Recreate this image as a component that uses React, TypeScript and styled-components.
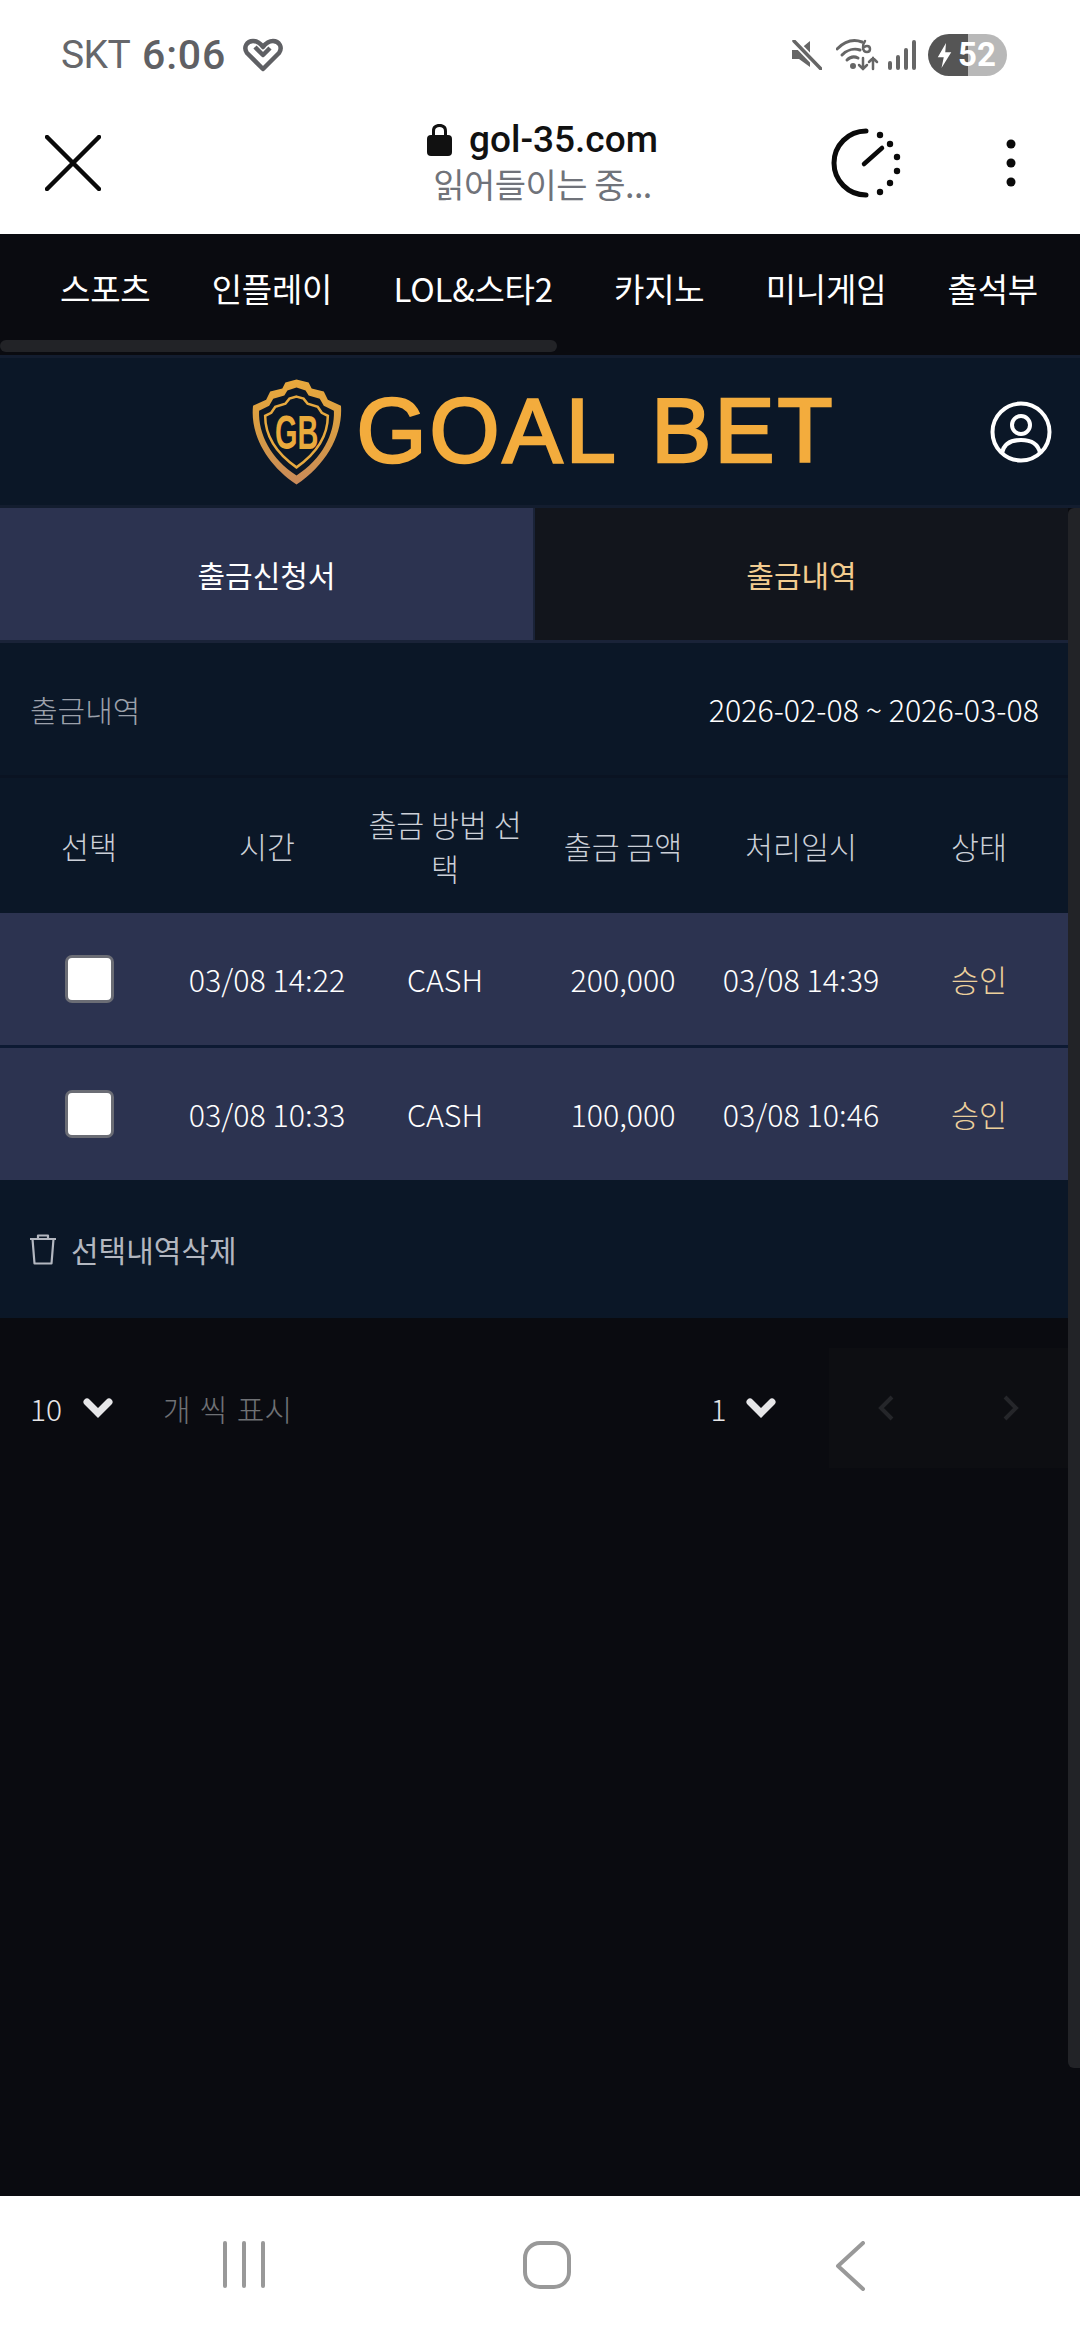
import React from "react";
import styled, { createGlobalStyle } from "styled-components";

const KR = `"Noto Sans CJK KR", "Noto Sans", sans-serif`;

const Global = createGlobalStyle`
  html, body { margin: 0; padding: 0; width: 1080px; height: 2340px; overflow: hidden; background: #0a0b10; }
  * { box-sizing: border-box; }
  #root { width: 1080px; height: 2340px; }
`;

const Page = styled.div`
  width: 1080px; height: 2340px; display: flex; flex-direction: column; background: #0a0b10;
  font-family: ${KR}; font-weight: 300; color: #fff;
`;

const StatusBar = styled.div`
  height: 92px; flex: none; background: #fff; display: flex; align-items: flex-start; justify-content: space-between;
  padding: 34px 73px 0 61px; color: #66676b; font-family: Roboto, "Liberation Sans", sans-serif;
`;
const StatusLeft = styled.div`display: flex; align-items: center; gap: 12px; height: 42px; font-size: 39px; line-height: 42px;`;
const Carrier = styled.span`font-weight: 400; letter-spacing: -0.6px;`;
const Clock = styled.span`font-weight: 500; font-size: 41px; color: #5f6064; letter-spacing: 0.8px; margin-right: 5px;`;
const StatusRight = styled.div`display: flex; align-items: center; height: 42px; gap: 10px;`;
const Battery = styled.div`
  width: 79px; height: 42px; border-radius: 21px; overflow: hidden; display: flex; align-items: center;
  background: linear-gradient(90deg, #555 0, #555 40px, #b8b8b8 40px, #b8b8b8 100%);
  color: #fff; font-family: Roboto, sans-serif; font-weight: 700; font-size: 33px; padding-left: 9px; gap: 6px; margin-left: 2px;
`;
const BatteryValue = styled.span`line-height: 42px;`;

const BrowserBar = styled.div`
  height: 142px; flex: none; background: #fff; display: grid; grid-template-columns: 1fr auto 1fr; align-items: center;
`;
const CloseBtn = styled.div`padding-left: 45px; display: flex; margin-top: -1px;`;
const UrlBox = styled.div`display: flex; flex-direction: column; align-items: center; margin: -3px 0 0 5px;`;
const UrlRow = styled.div`display: flex; align-items: center; gap: 17px; font-family: Roboto, sans-serif; font-weight: 500; font-size: 37px; line-height: 44px; color: #111;`;
const Loading = styled.div`font-family: ${KR}; font-weight: 400; font-size: 34px; line-height: 44px; color: #70737a; letter-spacing: -0.5px;`;
const BrowserRight = styled.div`display: flex; align-items: center; justify-content: flex-end; padding-right: 64px; gap: 104px; margin-top: -1px;`;

const NavBar = styled.div`height: 121px; flex: none; background: #0a0b10; display: flex; flex-direction: column;`;
const NavRow = styled.div`height: 106px; display: flex; align-items: flex-start; justify-content: space-between; padding: 26px 42px 0 60px; flex: none;`;
const NavItem = styled.div`font-size: 33px; line-height: 56px; font-weight: 400; white-space: nowrap; color: #fff; letter-spacing: -0.2px;`;
const NavThumb = styled.div`width: 557px; height: 12px; border-radius: 6px; background: #222327; flex: none;`;

const Header = styled.div`
  height: 153px; flex: none; background: #0b1727; border-top: 3px solid #131d2f; border-bottom: 3px solid #131d2f;
  display: grid; grid-template-columns: 1fr auto 1fr; align-items: center;
`;
const Logo = styled.div`display: flex; align-items: center; gap: 14px; margin-left: 6px;`;
const LogoText = styled.span`
  font-family: "Liberation Sans", Arial, sans-serif; font-size: 90px; line-height: 100px; font-weight: 400;
  color: #f3ac3d; -webkit-text-stroke: 2.5px #f3ac3d; letter-spacing: 3px; word-spacing: 8px; white-space: pre; margin-top: -2px; display: block;
`;
const UserBtn = styled.div`justify-self: end; padding-right: 28px; display: flex;`;

const Body = styled.div`flex: 1; display: flex; align-items: flex-start; min-height: 0; background: #0a0b10;`;
const Content = styled.div`width: 1068px; flex: none; display: flex; flex-direction: column;`;
const Track = styled.div`width: 12px; height: 1560px; flex: none; background: #222327; border-radius: 6px 0 0 6px;`;

const Tabs = styled.div`display: flex; height: 135px; border-bottom: 3px solid #1a2338; background: #1a2338;`;
const Tab = styled.div<{ $active?: boolean }>`
  flex: 1; display: flex; align-items: center; justify-content: center; font-size: 30px; font-weight: 400;
  background: ${p => (p.$active ? "#2c3350" : "#12151c")}; color: ${p => (p.$active ? "#fff" : "#f2cc90")};
  margin-right: ${p => (p.$active ? "2px" : "0")};
`;

const Panel = styled.div`background: #0b1727; display: flex; flex-direction: column;`;
const TitleRow = styled.div`
  height: 135px; display: flex; align-items: center; justify-content: space-between; padding: 0 29px 0 30px;
  border-bottom: 3px solid #0a1322; font-size: 30.4px;
`;
const TitleLabel = styled.span`color: #9ca1ab; font-size: 30px;`;
const Range = styled.span`color: #fff;`;

const Grid = styled.div<{ $h: number; $bg: string }>`
  display: grid; grid-template-columns: repeat(6, 178px); align-items: center; justify-items: center; text-align: center;
  height: ${p => p.$h}px; background: ${p => p.$bg}; font-size: 30.4px; line-height: 44px;
`;
const HeadCell = styled.div`color: #ccd0d8; padding: 0 10px;`;
const Divider = styled.div`height: 3px; background: #0d1a33;`;
const Cell = styled.div<{ $gold?: boolean }>`color: ${p => (p.$gold ? "#ecd09c" : "#fff")}; white-space: nowrap;`;
const Check = styled.div`width: 49px; height: 48px; background: #fff; border: 3px solid #6b6d75; border-radius: 7px;`;

const DeleteRow = styled.div`
  height: 138px; display: flex; align-items: center; gap: 14px; padding: 0 0 0 29px; background: #0b1727; color: #b3b7c0; font-size: 30px; font-weight: 400;
`;

const Pager = styled.div`height: 171px; display: flex; align-items: flex-start; padding-top: 30px; background: #0a0b10;`;
const PagerLeft = styled.div`display: flex; align-items: center; height: 120px; padding-left: 30px; flex: none;`;
const PagerNum = styled.span`color: #e6e6e8; font-size: 30px; width: 53px;`;
const PagerLabel = styled.span`color: #6f7175; font-size: 30px; margin-left: 50px; letter-spacing: 0.3px; word-spacing: 2px;`;
const PagerPage = styled.div`display: flex; align-items: center; height: 120px; margin-left: 418px; flex: none;`;
const PageNum = styled.span`color: #e6e6e8; font-size: 30px; width: 36px;`;
const PagerBtns = styled.div`
  flex: 1; height: 120px; margin-left: 53px; background: #0d0e12; display: flex; align-items: center; justify-content: space-between; padding: 0 49px 0 49px;
`;

const BottomNav = styled.div`
  height: 144px; flex: none; background: #fff; display: flex; align-items: flex-start; padding: 45px 0 0 223px;
`;
const RecentIcon = styled.div`display: flex; gap: 15px; width: 300px;`;
const RecentBar = styled.div`width: 4px; height: 47px; border-radius: 2px; background: #999;`;
const HomeIcon = styled.div`width: 48px; height: 48px; border: 4.5px solid #999; border-radius: 17px;`;
const BackIcon = styled.div`margin-left: 264px; display: flex;`;

const Chevron = () => (
  <svg width="30" height="22" viewBox="0 0 30 22"><path d="M4 5 L15 16 L26 5" fill="none" stroke="#e6e6e8" strokeWidth="7" strokeLinecap="round" strokeLinejoin="miter" /></svg>
);

const Shield = () => (
  <svg width="92" height="108" viewBox="0 0 91 106">
    <defs>
      <linearGradient id="sg" x1="0" y1="0" x2="0" y2="1">
        <stop offset="0" stopColor="#e9a93c" />
        <stop offset="0.55" stopColor="#d69a45" />
        <stop offset="1" stopColor="#c98a5a" />
      </linearGradient>
    </defs>
    <path d="M45 1 L57 4 L60 10 L72 13 L76 21 L89 27 C91 55 75 85 45 105 C15 85 -1 55 2 27 L15 21 L19 13 L31 10 L34 4 Z" fill="url(#sg)" />
    <path d="M45 9 L54 12 L57 17 L68 20 L72 27 L82 32 C83 55 70 80 45 96 C20 80 7 55 8 32 L18 27 L22 20 L33 17 L36 12 Z" fill="#0b1727" />
    <path d="M45 18 L52 20 L56 25 L66 28 L70 34 L76 37 C76 56 65 74 45 88 C25 74 14 56 14 37 L20 34 L24 28 L34 25 L38 20 Z" fill="none" stroke="#e7a93f" strokeWidth="2.5" />
    <text x="41" y="38" transform="scale(1.1 1.85)" textAnchor="middle" fontFamily="'Liberation Sans', sans-serif" fontWeight="700" fontSize="26" fill="#eaaa3c">GB</text>
  </svg>
);

const rows = [
  ["03/08 14:22", "CASH", "200,000", "03/08 14:39"],
  ["03/08 10:33", "CASH", "100,000", "03/08 10:46"],
];

export default function App() {
  return (
    <Page>
      <Global />
      <StatusBar>
        <StatusLeft>
          <Carrier>SKT</Carrier>
          <Clock>6:06</Clock>
          <svg width="40" height="34" viewBox="0 0 40 34" fill="none" stroke="#5f6064" strokeWidth="4.5" strokeLinejoin="round">
            <path d="M20 31 L4 15 C0 9 4 3 10 3 C14 3 17 5 20 9 C23 5 26 3 30 3 C36 3 40 9 36 15 Z" />
            <path d="M12 9 L20 17 L27 10" />
          </svg>
        </StatusLeft>
        <StatusRight>
          <svg width="30" height="30" viewBox="0 0 30 30">
            <path d="M0 10 H7 L18 1 V27 L7 19 H0 Z" fill="#666" />
            <path d="M2 1 L29 29" stroke="#fff" strokeWidth="7" />
            <path d="M2 1 L29 29" stroke="#666" strokeWidth="3.5" strokeLinecap="round" />
          </svg>
          <svg width="44" height="32" viewBox="0 0 44 32" fill="none" stroke="#666" strokeWidth="3" strokeLinecap="round" style={{ marginLeft: 4 }}>
            <path d="M1 10 C9 2 18 0 26 3" />
            <path d="M6 16 C11 11 18 9 24 11" />
            <path d="M11 21 C14 18 18 17 22 19" />
            <circle cx="17" cy="27" r="1.5" fill="#666" />
            <path d="M29 2 C26 6 26 13 31 13 C35 13 35 7 31 7 C29 7 27 9 27 10" strokeWidth="2.5" />
            <path d="M27 19 V30 M23 26 L27 30 L31 26 M37 30 V19 M33 23 L37 19 L41 23" strokeWidth="2.5" />
          </svg>
          <svg width="28" height="30" viewBox="0 0 28 30" stroke="#666" strokeWidth="4" strokeLinecap="round" style={{ margin: "0 0 0 -2px" }}>
            <path d="M2 23 V28 M10 17 V28 M18 10 V28 M26 2 V28" />
          </svg>
          <Battery>
            <svg width="15" height="25" viewBox="0 0 20 30" preserveAspectRatio="none" style={{ flex: "none" }}><path d="M12 0 L1 17 H9 L6 30 L19 11 H11 Z" fill="#fff" /></svg>
            <BatteryValue>52</BatteryValue>
          </Battery>
        </StatusRight>
      </StatusBar>

      <BrowserBar>
        <CloseBtn>
          <svg width="56" height="56" viewBox="0 0 56 56" stroke="#0a0a0a" strokeWidth="4.5" strokeLinecap="round"><path d="M2 2 L54 54 M54 2 L2 54" /></svg>
        </CloseBtn>
        <UrlBox>
          <UrlRow>
            <svg width="25" height="33" viewBox="0 0 25 33" fill="#111"><path d="M5 13 V8 C5 3 8 1 12.5 1 C17 1 20 3 20 8 V13 H17 V8 C17 5 15 4 12.5 4 C10 4 8 5 8 8 V13 Z" /><rect x="0" y="12" width="25" height="21" rx="4" /></svg>
            <span>gol-35.com</span>
          </UrlRow>
          <Loading>읽어들이는 중...</Loading>
        </UrlBox>
        <BrowserRight>
          <svg width="72" height="72" viewBox="828 126 72 72" fill="none" stroke="#0a0a0a" strokeLinecap="round">
            <path d="M864 130 A32 32 0 0 0 864 194" strokeWidth="5" />
            <path d="M862 163 L880 147" strokeWidth="4.5" />
            <g fill="#0a0a0a" stroke="none">
              <circle cx="878" cy="134" r="3.2" /><circle cx="888" cy="143" r="3.2" /><circle cx="895" cy="156" r="3.2" />
              <circle cx="895" cy="170" r="3.2" /><circle cx="888" cy="182" r="3.2" /><circle cx="878" cy="191" r="3.2" />
            </g>
          </svg>
          <svg width="10" height="48" viewBox="0 0 10 48" fill="#0a0a0a"><circle cx="5" cy="5" r="4.5" /><circle cx="5" cy="24" r="4.5" /><circle cx="5" cy="43" r="4.5" /></svg>
        </BrowserRight>
      </BrowserBar>

      <NavBar>
        <NavRow>
          {["스포츠", "인플레이", "LOL&스타2", "카지노", "미니게임", "출석부"].map(t => <NavItem key={t}>{t}</NavItem>)}
        </NavRow>
        <NavThumb />
      </NavBar>

      <Header>
        <span />
        <Logo>
          <Shield />
          <LogoText>GOAL BET</LogoText>
        </Logo>
        <UserBtn>
          <svg width="62" height="62" viewBox="0 0 62 62" fill="none" stroke="#fff" strokeWidth="4"><circle cx="31" cy="31" r="28.5" /><circle cx="31" cy="24" r="9" /><path d="M12 52 C14 42 22 39 31 39 C40 39 48 42 50 52" /></svg>
        </UserBtn>
      </Header>

      <Body>
        <Content>
          <Tabs>
            <Tab $active>출금신청서</Tab>
            <Tab>출금내역</Tab>
          </Tabs>
          <Panel>
            <TitleRow>
              <TitleLabel>출금내역</TitleLabel>
              <Range>2026-02-08 ~ 2026-03-08</Range>
            </TitleRow>
            <Grid $h={135} $bg="#0b1727">
              {["선택", "시간", "출금 방법 선택", "출금 금액", "처리일시", "상태"].map(t => <HeadCell key={t}>{t}</HeadCell>)}
            </Grid>
            {rows.map((r, i) => (
              <React.Fragment key={r[0]}>
                {i > 0 && <Divider />}
                <Grid $h={132} $bg="#2c3350">
                  <Check />
                  {r.map((c, j) => <Cell key={j}>{c}</Cell>)}
                  <Cell $gold>승인</Cell>
                </Grid>
              </React.Fragment>
            ))}
            <DeleteRow>
              <svg width="28" height="31" viewBox="0 0 28 31" fill="none" stroke="#b3b7c0" strokeWidth="2.2" strokeLinejoin="round"><path d="M1 5 H27 M9 5 V1.5 H19 V5 M3.5 5 L5.5 29.5 H22.5 L24.5 5" /></svg>
              <span>선택내역삭제</span>
            </DeleteRow>
          </Panel>
          <Pager>
            <PagerLeft>
              <PagerNum>10</PagerNum>
              <Chevron />
              <PagerLabel>개 씩 표시</PagerLabel>
            </PagerLeft>
            <PagerPage>
              <PageNum>1</PageNum>
              <Chevron />
            </PagerPage>
            <PagerBtns>
              <svg width="16" height="26" viewBox="0 0 16 26" fill="none" stroke="#25262a" strokeWidth="4"><path d="M14 2 L3 13 L14 24" /></svg>
              <svg width="16" height="26" viewBox="0 0 16 26" fill="none" stroke="#25262a" strokeWidth="4"><path d="M2 2 L13 13 L2 24" /></svg>
            </PagerBtns>
          </Pager>
        </Content>
        <Track />
      </Body>
      <BottomNav>
        <RecentIcon><RecentBar /><RecentBar /><RecentBar /></RecentIcon>
        <HomeIcon />
        <BackIcon>
          <svg width="30" height="50" viewBox="0 0 30 50" fill="none" stroke="#999" strokeWidth="4" strokeLinecap="round" strokeLinejoin="round"><path d="M28 2 L3 25 L28 48" /></svg>
        </BackIcon>
      </BottomNav>
    </Page>
  );
}
